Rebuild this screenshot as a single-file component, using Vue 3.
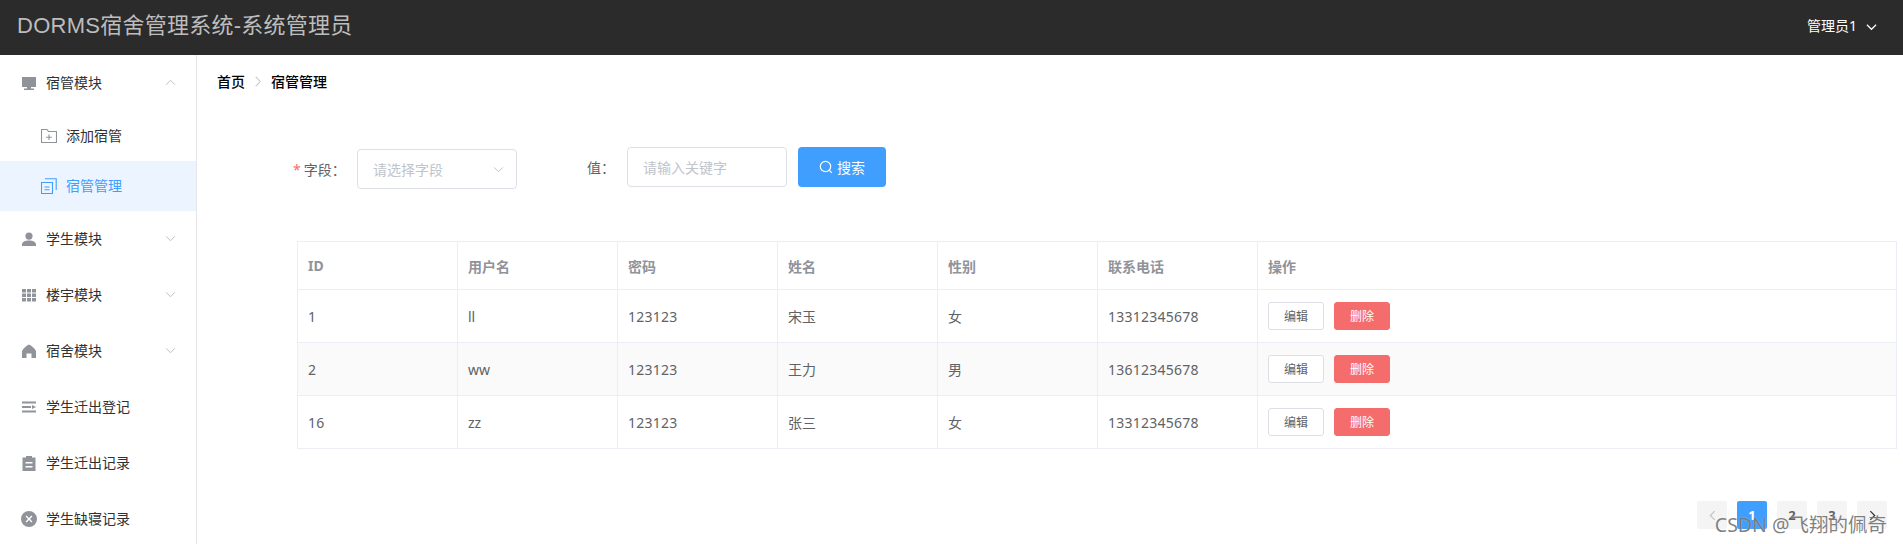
<script setup>
const topMenu = [
  { name: '学生模块', arrow: true, d: 'M8 1.5a3.6 3.6 0 1 1 0 7.2a3.6 3.6 0 0 1 0-7.2z M1 15v-1.5C1 11 4 9.5 8 9.5s7 1.5 7 4V15z' },
  { name: '楼宇模块', arrow: true, d: 'M1 2h4v3.5H1z M6 2h4v3.5H6z M11 2h4v3.5h-4z M1 6.5h4V10H1z M6 6.5h4V10H6z M11 6.5h4V10h-4z M1 11h4v3.5H1z M6 11h4v3.5H6z M11 11h4v3.5h-4z' },
  { name: '宿舍模块', arrow: true, d: 'M8 1.5C11 3 14 5.5 15 8v7h-4.5v-4.5h-5V15H1V8C2 5.5 5 3 8 1.5z' },
  { name: '学生迁出登记', d: 'M1 2.5h14v2H1z M1 7h9v2H1z M11 6l4 2-4 2z M1 11.5h14v2H1z' },
  { name: '学生迁出记录', d: 'M1.5 2.5H5V1h6v1.5h3.5V16h-13z M4.5 7v1.5h7V7z M4.5 11v1.5h7V11z' },
  { name: '学生缺寝记录', d: 'M8 0a8 8 0 1 1 0 16A8 8 0 0 1 8 0z M5.6 4.6L8 7l2.4-2.4 1 1L9 8l2.4 2.4-1 1L8 9l-2.4 2.4-1-1L7 8 4.6 5.6z' },
]

const columns = ['ID', '用户名', '密码', '姓名', '性别', '联系电话', '操作']

const rows = [
  { id: 1, user: 'll', pwd: '123123', name: '宋玉', sex: '女', phone: '13312345678' },
  { id: 2, user: 'ww', pwd: '123123', name: '王力', sex: '男', phone: '13612345678' },
  { id: 16, user: 'zz', pwd: '123123', name: '张三', sex: '女', phone: '13312345678' },
]
</script>

<template>
  <div class="page">
    <header class="topbar">
      <h1 class="topbar__title">DORMS宿舍管理系统-系统管理员</h1>
      <div class="topbar__user">
        <span>管理员1</span>
        <svg class="chevron" viewBox="0 0 12 8"><path d="M1 1.5l5 5 5-5" /></svg>
      </div>
    </header>

    <div class="layout">
      <aside class="side">
        <div class="side__item">
          <svg class="side__icon" viewBox="0 0 16 16"><path d="M1 2h14v10H1z M6 12h4v1.5h3V15H3v-1.5h3z" /></svg>
          <span class="side__text">宿管模块</span>
          <svg class="side__arrow" viewBox="0 0 12 8"><path d="M1 6.5l5-5 5 5" /></svg>
        </div>
        <div class="side__sub">
          <svg class="side__outline" viewBox="0 0 16 16"><path d="M.5 1.5h5.5l1.5 2h8v11H.5z M8 6.5v5.5M5.2 9.2h5.6" /></svg>
          <span class="side__text">添加宿管</span>
        </div>
        <div class="side__sub side__sub--active">
          <svg class="side__outline" viewBox="0 0 16 16"><path d="M.5 4.5h11v11H.5z M4 .8h11.2V12 M3.5 9h5M3.5 11.8h5" /></svg>
          <span class="side__text">宿管管理</span>
        </div>
        <div v-for="m in topMenu" :key="m.name" class="side__item">
          <svg class="side__icon" viewBox="0 0 16 16"><path :d="m.d" fill-rule="evenodd" /></svg>
          <span class="side__text">{{ m.name }}</span>
          <svg v-if="m.arrow" class="side__arrow" viewBox="0 0 12 8"><path d="M1 1.5l5 5 5-5" /></svg>
        </div>
      </aside>

      <main class="main">
        <nav class="crumb">
          <span>首页</span>
          <svg class="crumb__sep" viewBox="0 0 8 12"><path d="M1.5 1l5 5-5 5" /></svg>
          <span>宿管管理</span>
        </nav>

        <form class="filter" @submit.prevent>
          <div class="filter__field filter__field--select">
            <label class="filter__label"><i>*</i>字段：</label>
            <div class="select">
              <span>请选择字段</span>
              <svg class="select__arrow" viewBox="0 0 12 8"><path d="M1 1.5l5 5 5-5" /></svg>
            </div>
          </div>
          <div class="filter__field filter__field--value">
            <label class="filter__label">值：</label>
            <input class="input" placeholder="请输入关键字" />
          </div>
          <button class="btn-search" type="button">
            <svg viewBox="0 0 14 14"><circle cx="6.5" cy="6.5" r="5.2" /><path d="M10.4 10.4l2.4 2.4" /></svg>
            <span>搜索</span>
          </button>
        </form>

        <table class="grid">
          <colgroup>
            <col v-for="n in 6" :key="n" class="grid__col" />
            <col />
          </colgroup>
          <thead>
            <tr><th v-for="c in columns" :key="c">{{ c }}</th></tr>
          </thead>
          <tbody>
            <tr v-for="r in rows" :key="r.id">
              <td class="grid__num">{{ r.id }}</td>
              <td>{{ r.user }}</td>
              <td class="grid__num">{{ r.pwd }}</td>
              <td>{{ r.name }}</td>
              <td>{{ r.sex }}</td>
              <td class="grid__num">{{ r.phone }}</td>
              <td>
                <div class="grid__actions">
                  <button class="btn-edit" type="button">编辑</button>
                  <button class="btn-del" type="button">删除</button>
                </div>
              </td>
            </tr>
          </tbody>
        </table>

        <div class="pager">
          <span class="pager__btn pager__btn--off"><svg viewBox="0 0 8 12"><path d="M6.5 1l-5 5 5 5" /></svg></span>
          <span class="pager__btn pager__btn--on">1</span>
          <span class="pager__btn">2</span>
          <span class="pager__btn">3</span>
          <span class="pager__btn"><svg viewBox="0 0 8 12"><path d="M1.5 1l5 5-5 5" /></svg></span>
        </div>
      </main>
    </div>

    <div class="watermark">CSDN @飞翔的佩奇</div>
  </div>
</template>

<style scoped>
.page {
  position: relative;
  height: 544px;
  overflow: hidden;
  display: flex;
  flex-direction: column;
  background: #fff;
  font-family: "Noto Sans", "Noto Sans CJK SC", sans-serif;
  font-size: 14px;
  color: #303133;
}

.topbar {
  height: 55px;
  flex: none;
  display: flex;
  align-items: center;
  justify-content: space-between;
  padding: 0 26px 0 17px;
  background: #2b2b2b;
}

.topbar__title {
  margin: 0 0 4px;
  font-family: "Liberation Sans", "Noto Sans CJK SC", sans-serif;
  font-size: 22px;
  font-weight: 400;
  line-height: 1;
  letter-spacing: 0.25px;
  color: #bdbdbd;
}

.topbar__user {
  display: flex;
  align-items: center;
  gap: 9px;
  padding-bottom: 2px;
  color: #fff;
  font-size: 14px;
}

.topbar__user span {
  margin-bottom: 3px;
}

.chevron {
  width: 11px;
  height: 8px;
  fill: none;
  stroke: #fff;
  stroke-width: 1.3;
}

.layout {
  flex: 1;
  display: flex;
  min-height: 0;
}

.side {
  width: 196px;
  flex: none;
  border-right: 1px solid #e6e6e6;
}

.side__item {
  height: 56px;
  display: flex;
  align-items: center;
  padding-left: 21px;
  position: relative;
}

.side__text {
  margin-bottom: 2px;
}

.side__icon {
  width: 16px;
  height: 16px;
  margin-right: 9px;
  fill: #909399;
}

.side__arrow {
  position: absolute;
  left: 165px;
  top: 24px;
  width: 11px;
  height: 7px;
  fill: none;
  stroke: #b4b7bd;
  stroke-width: 1;
}

.side__sub {
  height: 50px;
  display: flex;
  align-items: center;
  padding-left: 41px;
  color: #303133;
}

.side__sub--active {
  background: #ecf5ff;
  color: #409eff;
}

.side__outline {
  width: 16px;
  height: 16px;
  margin-right: 9px;
  fill: none;
  stroke: #909399;
  stroke-width: 1.1;
}

.side__sub--active .side__outline {
  stroke: #409eff;
}

.main {
  flex: 1;
  min-width: 0;
}

.crumb {
  height: 52px;
  display: flex;
  align-items: center;
  padding-left: 20px;
  color: #000;
  font-weight: 500;
}

.crumb__sep {
  width: 8px;
  height: 11px;
  margin: 0 9px;
  fill: none;
  stroke: #c0c4cc;
  stroke-width: 1.1;
}

.filter {
  display: flex;
  align-items: flex-start;
  margin-top: 40px;
  padding-left: 96px;
}

.filter__field {
  display: flex;
  align-items: center;
  color: #606266;
}

.filter__field--select {
  margin-top: 2px;
}

.filter__field--select .filter__label {
  width: 64px;
}

.filter__field--value {
  margin-left: 70px;
}

.filter__field--value .filter__label {
  width: 40px;
}

.filter__label i {
  margin-right: 3px;
  font-style: normal;
  color: #f56c6c;
}

.select,
.input {
  box-sizing: border-box;
  width: 160px;
  height: 40px;
  padding: 0 15px;
  border: 1px solid #dcdfe6;
  border-radius: 4px;
  background: #fff;
  font: inherit;
  color: #c0c4cc;
  outline: none;
}

.select {
  display: flex;
  align-items: center;
  justify-content: space-between;
  padding-right: 12px;
}

.select__arrow {
  width: 11px;
  height: 7px;
  fill: none;
  stroke: #c0c4cc;
  stroke-width: 1.1;
}

.input::placeholder {
  color: #c0c4cc;
}

.btn-search {
  box-sizing: border-box;
  height: 40px;
  width: 88px;
  margin-left: 11px;
  display: flex;
  align-items: center;
  justify-content: center;
  gap: 4px;
  border: none;
  border-radius: 4px;
  background: #409eff;
  color: #fff;
  font: inherit;
}

.btn-search svg {
  width: 14px;
  height: 14px;
  fill: none;
  stroke: #fff;
  stroke-width: 1.2;
}

.grid {
  width: 1600px;
  margin: 52px 0 0 100px;
  table-layout: fixed;
  border-collapse: collapse;
  color: #606266;
}

.grid__col {
  width: 160px;
}

.grid th,
.grid td {
  padding: 0 10px;
  border: 1px solid #ebeef5;
  text-align: left;
}

.grid th {
  height: 47px;
  font-weight: 700;
  color: #909399;
}

.grid td {
  height: 52px;
}

.grid .grid__num {
  letter-spacing: 0.25px;
}

.grid tbody tr:nth-child(2) td {
  background: #fafafa;
}

.grid__actions {
  display: flex;
  gap: 10px;
}

.btn-edit,
.btn-del {
  box-sizing: border-box;
  width: 56px;
  height: 28px;
  padding: 0;
  border-radius: 3px;
  font: inherit;
  font-size: 12px;
}

.btn-edit {
  border: 1px solid #dcdfe6;
  background: #fff;
  color: #606266;
}

.btn-del {
  border: 1px solid #f56c6c;
  background: #f56c6c;
  color: #fff;
}

.pager {
  display: flex;
  justify-content: flex-end;
  gap: 10px;
  margin-top: 52px;
  padding-right: 16px;
}

.pager__btn {
  width: 30px;
  height: 28px;
  display: flex;
  align-items: center;
  justify-content: center;
  border-radius: 2px;
  background: #f4f4f5;
  color: #606266;
  font-size: 13px;
  font-weight: 700;
}

.pager__btn svg {
  width: 7px;
  height: 11px;
  fill: none;
  stroke: #303133;
  stroke-width: 1.4;
}

.pager__btn--off svg {
  stroke: #c0c4cc;
}

.pager__btn--on {
  background: #409eff;
  color: #fff;
}

.watermark {
  position: absolute;
  right: 16px;
  bottom: 7px;
  font-size: 19.5px;
  line-height: 24px;
  color: rgba(105, 105, 105, 0.85);
  text-shadow: 0 0 1px rgba(255, 255, 255, 0.6);
  white-space: nowrap;
}
</style>
